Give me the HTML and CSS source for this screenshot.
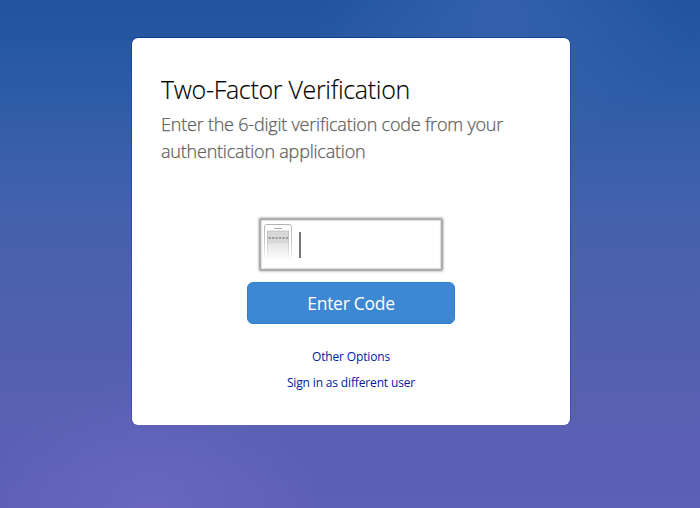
FILE: index.html
```
<!DOCTYPE html>
<html lang="en">
<head>
<meta charset="utf-8">
<title>Two-Factor Verification</title>
<link rel="stylesheet" href="styles.css">
</head>
<body>
<main class="card">
  <h1 class="title"><span>Two-Factor Verification</span></h1>
  <p class="intro"><span>Enter the 6-digit verification code from your</span><br><span>authentication application</span></p>
  <form class="form">
    <div class="code-field">
      <svg class="phone" width="30" height="39" viewBox="0 0 30 39" aria-hidden="true">
        <defs>
          <linearGradient id="edge" x1="0" y1="0" x2="0" y2="1"><stop offset="0" stop-color="#b4b4b4"/><stop offset=".5" stop-color="#cacaca"/><stop offset="1" stop-color="#fff"/></linearGradient>
          <linearGradient id="screen" x1="0" y1="0" x2="0" y2="1"><stop offset="0" stop-color="#e0e0e0"/><stop offset=".5" stop-color="#e9e9e9"/><stop offset="1" stop-color="#fff"/></linearGradient>
        </defs>
        <path d="M1.500 38V3.500a2 2 0 0 1 2-2h23a2 2 0 0 1 2 2V38" fill="none" stroke="url(#edge)"/>
        <path d="M11 5.500h8" stroke="#aaa"/>
        <path d="M4 8h22v30H4z" fill="url(#screen)"/>
        <path d="M4 8h22v12.500H4z" fill="#d8d8d8"/>
        <path d="M4.500 38V8h21V38" fill="none" stroke="url(#edge)" stroke-width=".7"/>
        <path d="M5.500 15h2.200M9 15h2.200M12.500 15h2.200M16 15h2.200M19.500 15h2.200M23 15h2.200" stroke="#999" stroke-width="2"/>
      </svg>
      <span class="caret"></span>
    </div>
    <button class="submit" type="button"><span>Enter Code</span></button>
  </form>
  <nav class="links">
    <a href="#"><span>Other Options</span></a>
    <a href="#"><span>Sign in as different user</span></a>
  </nav>
</main>
</body>
</html>
```
FILE: styles.css
```
* { box-sizing: border-box; }
body {
  margin: 0;
  height: 508px;
  padding-top: 38px;
  overflow: hidden;
  font-family: "Open Sans", sans-serif;
  background:
    radial-gradient(ellipse 170px 130px at 150px 508px, rgba(118,112,202,.45), transparent),
    radial-gradient(ellipse 190px 170px at 500px 0, rgba(72,108,184,.5), transparent),
    linear-gradient(#20549d 0, #2c5ba5 17%, #3d60ab 34%, #4961ad 50%, #5260b0 68%, #5a60b3 84%, #5e5fb6 100%);
}
.card {
  width: 438px;
  height: 387px;
  margin-left: 132px;
  padding: 34px 29px 0;
  border-radius: 6px;
  background: #fff;
  box-shadow: 0 -1px 0 0 rgba(0,36,148,.6), -1px 0 0 0 rgba(0,36,148,.3), 1px 0 0 0 rgba(0,36,148,.3);
}
.title {
  margin: 0;
  font-size: 25px;
  font-weight: 300;
  line-height: 34px;
  letter-spacing: -.31px;
  color: #000;
  -webkit-text-stroke: .15px #000;
}
.intro {
  margin: 5px 0 0;
  font-size: 18px;
  font-weight: 300;
  line-height: 27px;
  letter-spacing: -.21px;
  color: #606060;
  -webkit-text-stroke: .25px #606060;
}
.form {
  display: flex;
  flex-direction: column;
  align-items: center;
  margin-top: 53px;
}
.code-field {
  display: flex;
  width: 184px;
  height: 53px;
  padding: 3px 2px;
  border: 2px solid #acacae;
  border-radius: 2px;
  box-shadow: 0 0 2px 1px #cfcfcf, inset 0 0 1px 1px #dedede;
}
.phone { flex: none; }
.caret {
  width: 1.500px;
  height: 26px;
  margin: 9px 0 0 6px;
  background: #777;
}
.submit {
  width: 208px;
  height: 42px;
  margin-top: 11px;
  padding: 0;
  border: 1px solid #2f7eca;
  border-radius: 6px;
  background: #3e87d2;
  color: #fff;
  font: 400 17.500px/40px "Open Sans", sans-serif;
  letter-spacing: -.28px;
}
.links {
  display: flex;
  flex-direction: column;
  align-items: center;
  gap: 9px;
  margin-top: 24px;
}
.links a {
  font-size: 12px;
  line-height: 17px;
  letter-spacing: -.15px;
  color: #00209f;
  text-decoration: none;
}
```
